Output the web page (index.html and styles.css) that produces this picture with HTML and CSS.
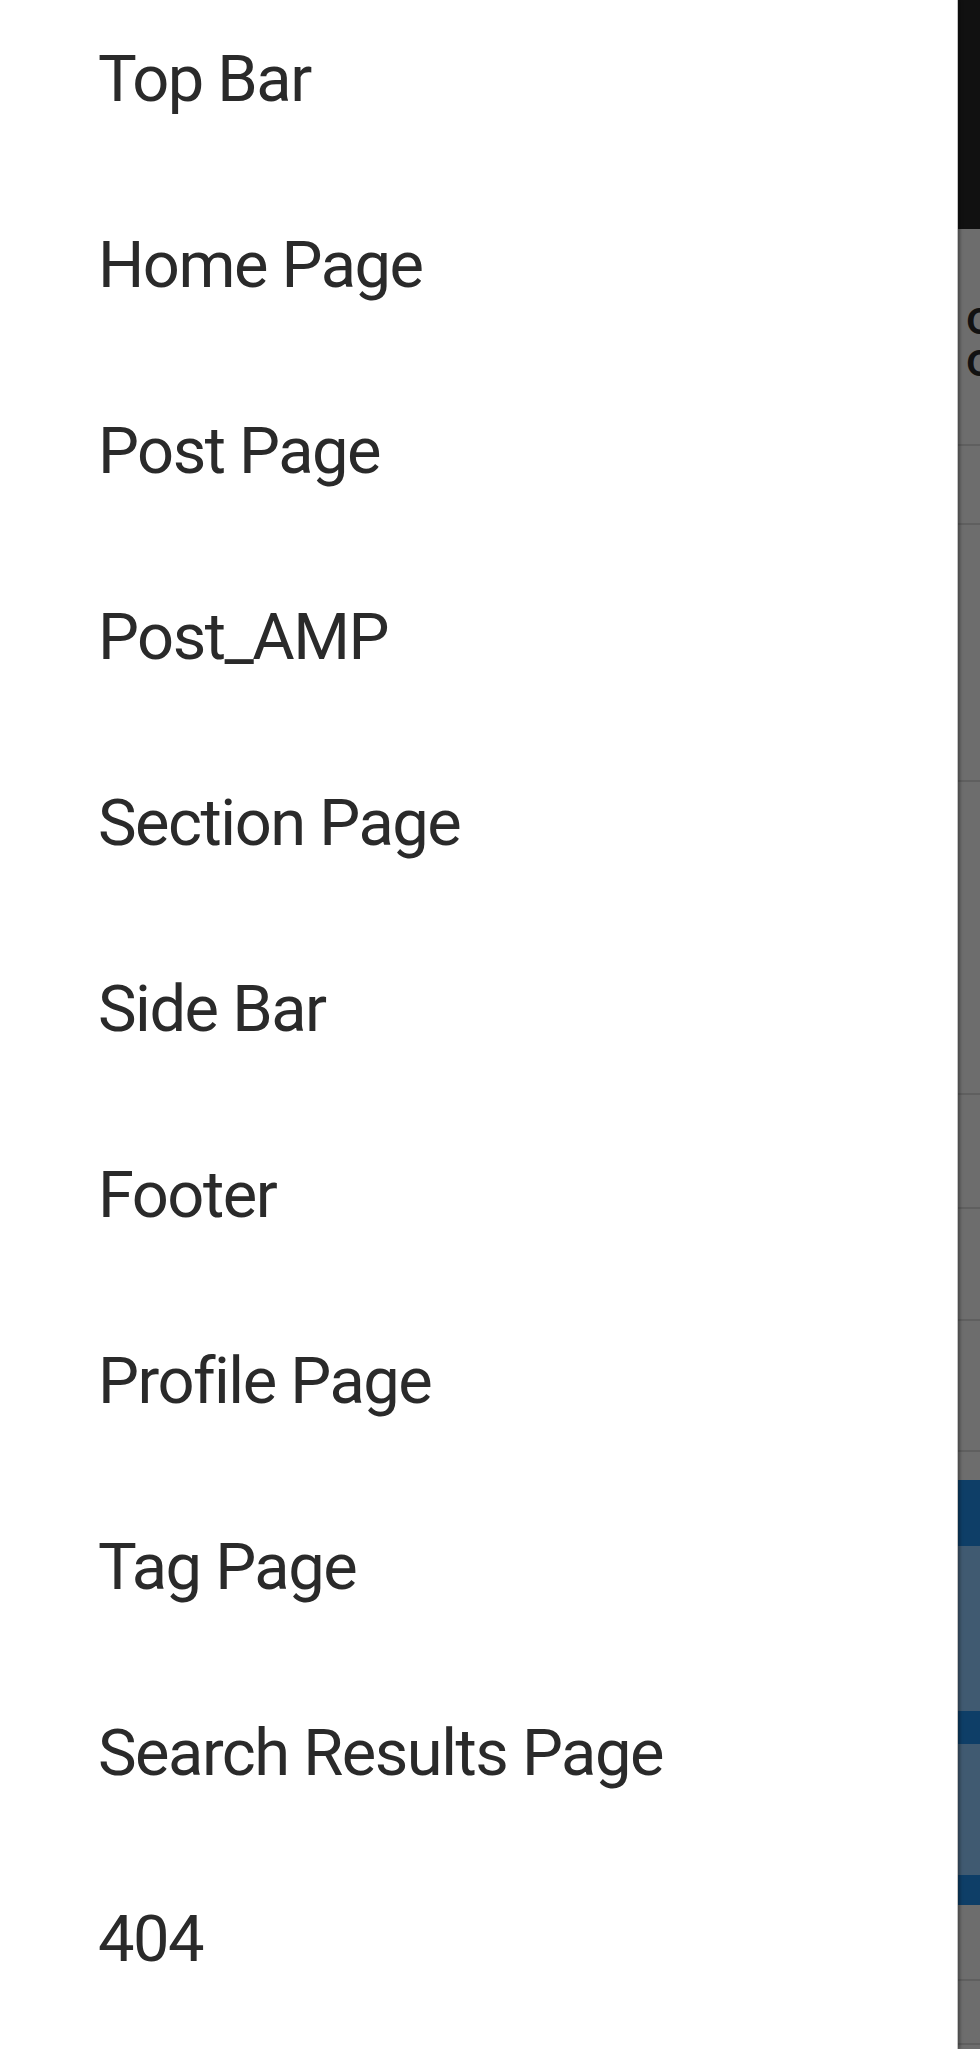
FILE: index.html
```html
<!DOCTYPE html>
<html lang="en">
<head>
    <meta charset="UTF-8">
    <meta name="viewport" content="width=device-width, initial-scale=1.0">
    <title>Menu</title>
    <link rel="stylesheet" href="styles.css">
</head>
<body>
    <div class="screen">
        <!-- Side menu -->
        <nav class="drawer">
            <ul class="menu">
                <li><a href="#">Top Bar</a></li>
                <li><a href="#">Home Page</a></li>
                <li><a href="#">Post Page</a></li>
                <li><a href="#">Post_AMP</a></li>
                <li><a href="#">Section Page</a></li>
                <li><a href="#">Side Bar</a></li>
                <li><a href="#">Footer</a></li>
                <li><a href="#">Profile Page</a></li>
                <li><a href="#">Tag Page</a></li>
                <li><a href="#">Search Results Page</a></li>
                <li><a href="#">404</a></li>
            </ul>
        </nav>

        <!-- Page behind the dimmed overlay -->
        <div class="backdrop">
            <div class="bd-header"></div>
            <div class="bd-title">
                <span>o</span>
                <span>o</span>
            </div>
            <div class="bd-row" style="height: 79px"></div>
            <div class="bd-row" style="height: 257px"></div>
            <div class="bd-row" style="height: 313px"></div>
            <div class="bd-row" style="height: 114px"></div>
            <div class="bd-row" style="height: 112px"></div>
            <div class="bd-row" style="height: 131px"></div>
            <div class="bd-gap"></div>
            <div class="bd-blue" style="height: 66px"></div>
            <div class="bd-slate" style="height: 165px"></div>
            <div class="bd-blue" style="height: 33px"></div>
            <div class="bd-slate" style="height: 131px"></div>
            <div class="bd-blue" style="height: 30px"></div>
            <div class="bd-row" style="height: 76px"></div>
            <div class="bd-row" style="height: 64px"></div>
        </div>
    </div>
</body>
</html>
```

FILE: styles.css
```css
/* Global */
body {
    margin: 0;
    padding: 0;
    background: #6d6d6d;
    font-family: Roboto, "Liberation Sans", Arial, sans-serif;
}

.screen {
    display: flex;
    width: 980px;
    height: 2049px;
    overflow: hidden;
}

/* Drawer */
.drawer {
    width: 957px;
    flex-shrink: 0;
    background: #ffffff;
    border-right: 1px solid #c4c4c4;
    box-shadow: 2px 0 3px rgba(0, 0, 0, 0.35);
    position: relative;
    z-index: 1;
}

.menu {
    list-style: none;
    margin: 0;
    padding: 0;
}

.menu li {
    height: 186px;
    box-sizing: border-box;
    padding: 46px 0 0 98px;
}

.menu a {
    display: block;
    font-size: 65px;
    line-height: 66px;
    letter-spacing: -1.5px;
    color: #2a2a2a;
    text-decoration: none;
}

/* Backdrop (dimmed page) */
.backdrop {
    flex: 1;
    display: flex;
    flex-direction: column;
    background: #6d6d6d;
}

.bd-header {
    height: 229px;
    background: #111111;
    flex-shrink: 0;
}

.bd-title {
    height: 217px;
    flex-shrink: 0;
    display: flex;
    flex-direction: column;
    padding: 68px 0 0 8px;
    box-sizing: border-box;
    font-size: 48px;
    font-weight: 500;
    line-height: 42px;
    color: #121212;
    border-bottom: 2px solid #5f5f5f;
}

.bd-row {
    flex-shrink: 0;
    box-sizing: border-box;
    border-bottom: 2px solid #5f5f5f;
}

.bd-gap {
    height: 28px;
    flex-shrink: 0;
}

.bd-blue {
    flex-shrink: 0;
    background: #0e3e67;
}

.bd-slate {
    flex-shrink: 0;
    background: #405a71;
}
```
